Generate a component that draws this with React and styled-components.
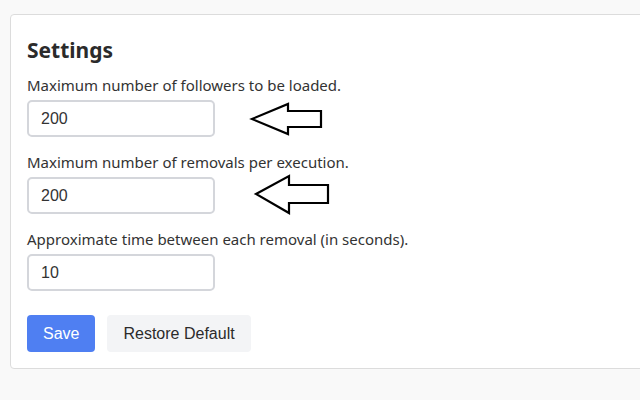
import React from "react";
import styled, { createGlobalStyle } from "styled-components";

const Global = createGlobalStyle`
  html, body { margin: 0; padding: 0; background: #f9f9f9; overflow: hidden; }
  body { font-family: "Noto Sans", "Open Sans", sans-serif; }
`;

const Page = styled.div`
  padding: 14px 0 0 10px;
  height: 400px;
  box-sizing: border-box;
  overflow: hidden;
`;

const Card = styled.div`
  position: relative;
  width: 660px;
  box-sizing: border-box;
  background: #fff;
  border: 1px solid #dcdcdc;
  border-radius: 4px;
  padding: 16px 16px 16px 16px;
  display: flex;
  flex-direction: column;
`;

const Title = styled.h2`
  margin: 4px 0 10px;
  font-size: 21px;
  line-height: 30px;
  font-weight: 700;
  color: #2b2b2b;
`;

const Fields = styled.div`
  display: flex;
  flex-direction: column;
  gap: 15px;
`;

const Field = styled.label`
  display: flex;
  flex-direction: column;
  align-items: flex-start;
  gap: 4px;
`;

const LabelText = styled.span`
  font-size: 15px;
  line-height: 21px;
  color: #333;
`;

const Input = styled.input`
  box-sizing: border-box;
  width: 188px;
  height: 37px;
  border: 2px solid #d4d6db;
  border-radius: 5px;
  padding: 0 12px;
  font-family: "Liberation Sans", Arial, sans-serif;
  font-size: 16px;
  color: #333;
  outline: none;
`;

const Actions = styled.div`
  display: flex;
  gap: 12px;
  margin-top: 24px;
`;

const Button = styled.button`
  height: 37px;
  border: none;
  border-radius: 4px;
  padding: 0 16px;
  font-family: "Liberation Sans", Arial, sans-serif;
  font-size: 16px;
  background: ${(p) => (p.$primary ? "#4f7ff2" : "#f3f4f6")};
  color: ${(p) => (p.$primary ? "#fff" : "#2b2b2b")};
  cursor: pointer;
`;

const Arrow = styled.svg`
  position: absolute;
  left: 0;
  top: 0;
  overflow: visible;
`;

export default function App() {
  return (
    <>
      <Global />
      <Page>
        <Card>
          <Title>Settings</Title>
          <Fields>
            <Field>
              <LabelText>Maximum number of followers to be loaded.</LabelText>
              <Input defaultValue="200" />
            </Field>
            <Field>
              <LabelText>Maximum number of removals per execution.</LabelText>
              <Input defaultValue="200" />
            </Field>
            <Field>
              <LabelText>Approximate time between each removal (in seconds).</LabelText>
              <Input defaultValue="10" />
            </Field>
          </Fields>
          <Actions>
            <Button $primary>Save</Button>
            <Button>Restore Default</Button>
          </Actions>
          <Arrow width="1" height="1">
            <polygon
              points="241,104 277,89 277,96 310,96 310,112 277,112 277,119"
              fill="none"
              stroke="#000"
              strokeWidth="2.2"
              strokeLinejoin="miter"
            />
            <polygon
              points="245,179 278,161 278,170 317,170 317,188 278,188 278,198"
              fill="none"
              stroke="#000"
              strokeWidth="2.2"
              strokeLinejoin="miter"
            />
          </Arrow>
        </Card>
      </Page>
    </>
  );
}
